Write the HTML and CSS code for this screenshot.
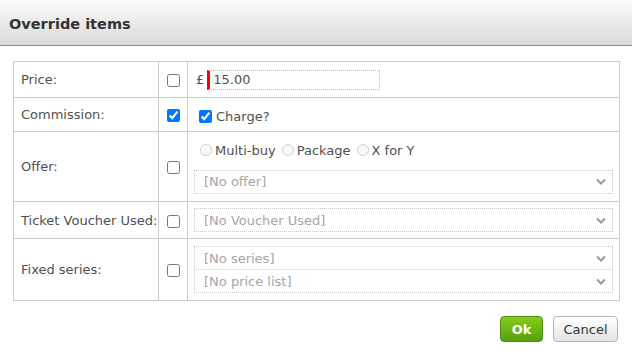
FILE: index.html
```html
<!DOCTYPE html>
<html lang="en">
<head>
    <meta charset="UTF-8">
    <meta name="viewport" content="width=device-width, initial-scale=1.0">
    <title>Override items</title>
    <link rel="stylesheet" href="styles.css">
</head>
<body>
    <div class="dialog-header">
        <h1>Override items</h1>
    </div>
    <div class="dialog-body">
        <table class="override-table">
            <tr class="row-price">
                <td class="label">Price:</td>
                <td class="check"><input type="checkbox"></td>
                <td class="value">
                    <div class="price">
                        <span class="currency">£</span>
                        <span class="price-input">15.00</span>
                    </div>
                </td>
            </tr>
            <tr class="row-commission">
                <td class="label">Commission:</td>
                <td class="check"><input type="checkbox" checked></td>
                <td class="value">
                    <label class="charge"><input type="checkbox" checked> Charge?</label>
                </td>
            </tr>
            <tr class="row-offer">
                <td class="label">Offer:</td>
                <td class="check"><input type="checkbox"></td>
                <td class="value">
                    <div class="radios">
                        <label><input type="radio" name="offer" disabled> Multi-buy</label>
                        <label><input type="radio" name="offer" disabled> Package</label>
                        <label><input type="radio" name="offer" disabled> X for Y</label>
                    </div>
                    <div class="select">
                        <span>[No offer]</span>
                        <svg width="10" height="7" viewBox="0 0 10 7"><path d="M1 1.5 L5 5.5 L9 1.5" fill="none" stroke="#9a9a9a" stroke-width="2"/></svg>
                    </div>
                </td>
            </tr>
            <tr class="row-voucher">
                <td class="label">Ticket Voucher Used:</td>
                <td class="check"><input type="checkbox"></td>
                <td class="value">
                    <div class="select">
                        <span>[No Voucher Used]</span>
                        <svg width="10" height="7" viewBox="0 0 10 7"><path d="M1 1.5 L5 5.5 L9 1.5" fill="none" stroke="#9a9a9a" stroke-width="2"/></svg>
                    </div>
                </td>
            </tr>
            <tr class="row-series">
                <td class="label">Fixed series:</td>
                <td class="check"><input type="checkbox"></td>
                <td class="value">
                    <div class="select">
                        <span>[No series]</span>
                        <svg width="10" height="7" viewBox="0 0 10 7"><path d="M1 1.5 L5 5.5 L9 1.5" fill="none" stroke="#9a9a9a" stroke-width="2"/></svg>
                    </div>
                    <div class="select">
                        <span>[No price list]</span>
                        <svg width="10" height="7" viewBox="0 0 10 7"><path d="M1 1.5 L5 5.5 L9 1.5" fill="none" stroke="#9a9a9a" stroke-width="2"/></svg>
                    </div>
                </td>
            </tr>
        </table>
        <div class="buttons">
            <button class="btn btn-ok">Ok</button>
            <button class="btn btn-cancel">Cancel</button>
        </div>
    </div>
</body>
</html>
```

FILE: styles.css
```css
/* Override items dialog */
body {
    margin: 0;
    background: #fff;
    font-family: "DejaVu Sans", Verdana, sans-serif;
    font-size: 13px;
    color: #505050;
}

.dialog-header {
    height: 45px;
    background: linear-gradient(#fbfbfb, #d9d9d9);
    border-bottom: 1px solid #8a8a8a;
    display: flex;
    align-items: center;
    padding-left: 9px;
}

.dialog-header h1 {
    margin: 2px 0 0 0;
    font-size: 14.5px;
    font-weight: bold;
    color: #333;
}

.dialog-body {
    padding: 15px 13px 0 13px;
}

/* Table of fields */
.override-table {
    width: 607px;
    border-collapse: collapse;
}

.override-table td {
    border: 1px solid #cccccc;
    padding: 0;
    vertical-align: middle;
}

td.label {
    width: 137px;
    padding-left: 7px;
}

td.check {
    width: 28px;
    text-align: center;
}

td.value {
    padding: 0 6px;
}

.row-price { height: 36px; }
.row-commission { height: 34px; }
.row-offer { height: 70px; }
.row-voucher { height: 37px; }
.row-series { height: 62px; }

input[type="checkbox"] {
    width: 13px;
    height: 13px;
    margin: 0;
    vertical-align: middle;
}

/* Price input */
.price {
    display: flex;
    align-items: center;
    padding-left: 2px;
}

.currency {
    margin-right: 3px;
}

.price-input {
    width: 166px;
    height: 18px;
    line-height: 18px;
    border: 1px dotted #bbb;
    border-left: 3px solid #ff0000;
    padding-left: 3px;
}

.charge {
    padding-left: 5px;
    display: flex;
    align-items: center;
    gap: 4px;
    padding-top: 4px;
}

/* Offer radios */
.radios {
    display: flex;
    gap: 6px;
    padding-left: 6px;
    padding-top: 3px;
    margin-bottom: 12px;
}

.radios label {
    display: flex;
    align-items: center;
    gap: 3px;
}

.radios input {
    margin: 0;
    width: 12px;
    height: 12px;
}

/* Select boxes */
.select {
    height: 22px;
    border: 1px dotted #c8c8c8;
    display: flex;
    align-items: center;
    justify-content: space-between;
    padding: 0 6px 0 9px;
    color: #a6a6a6;
}

.select + .select {
    border-top: none;
}

/* Buttons */
.buttons {
    display: flex;
    justify-content: flex-end;
    gap: 10px;
    padding-top: 15px;
    padding-right: 1px;
}

.btn {
    height: 26px;
    border-radius: 4px;
    font-family: inherit;
    font-size: 13px;
    padding: 0 6px;
}

.btn-ok {
    background: linear-gradient(#86cc1a, #55a00b);
    border: 1px solid #4b8f12;
    color: #fff;
    font-weight: bold;
    width: 43px;
}

.btn-cancel {
    background: linear-gradient(#ffffff, #e3e3e3);
    border: 1px solid #b5b5b5;
    color: #333;
    width: 65px;
}
```
